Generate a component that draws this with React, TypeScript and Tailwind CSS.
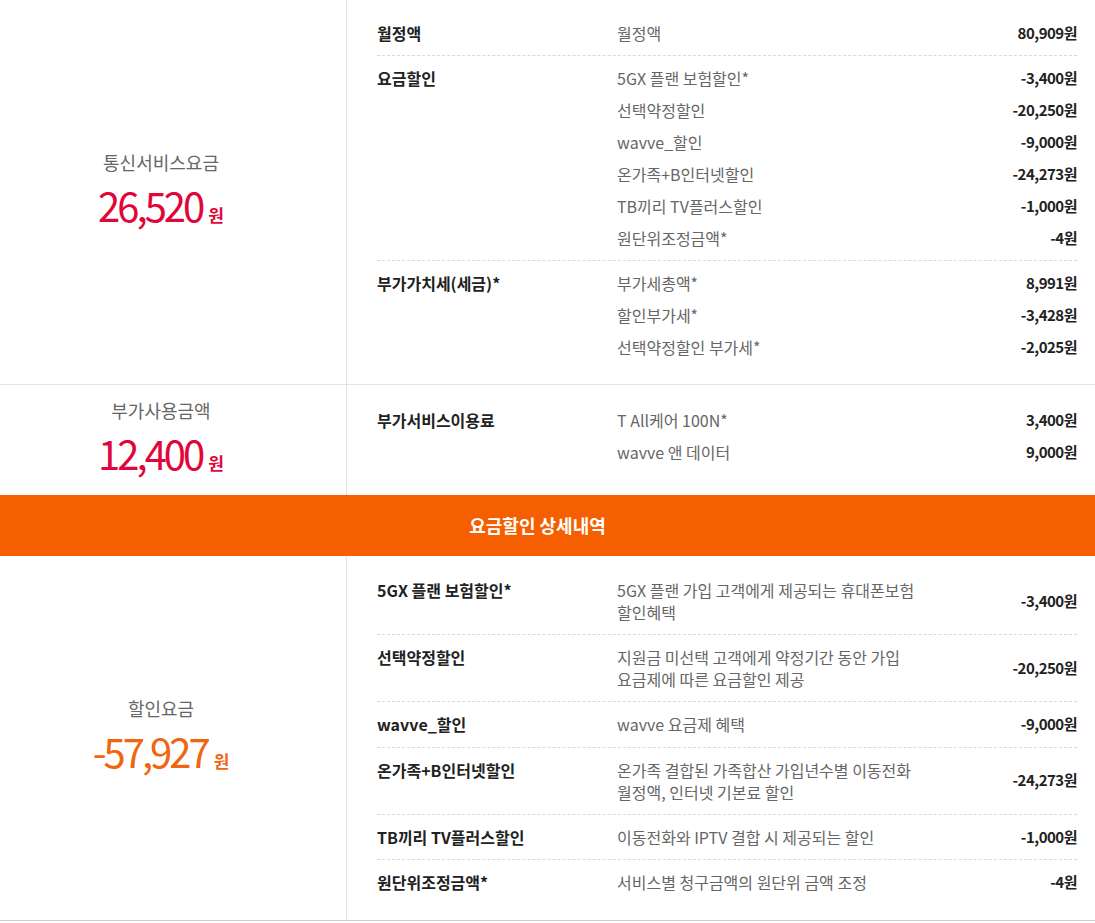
import React from "react";

type Line = { name: string; amount: string };
type Group = { title: string; lines: Line[] };

const FONT = '"Noto Sans CJK KR", "Noto Sans", sans-serif';

const serviceGroups: Group[] = [
  { title: "월정액", lines: [{ name: "월정액", amount: "80,909원" }] },
  {
    title: "요금할인",
    lines: [
      { name: "5GX 플랜 보험할인*", amount: "-3,400원" },
      { name: "선택약정할인", amount: "-20,250원" },
      { name: "wavve_할인", amount: "-9,000원" },
      { name: "온가족+B인터넷할인", amount: "-24,273원" },
      { name: "TB끼리 TV플러스할인", amount: "-1,000원" },
      { name: "원단위조정금액*", amount: "-4원" },
    ],
  },
  {
    title: "부가가치세(세금)*",
    lines: [
      { name: "부가세총액*", amount: "8,991원" },
      { name: "할인부가세*", amount: "-3,428원" },
      { name: "선택약정할인 부가세*", amount: "-2,025원" },
    ],
  },
];

const extraGroups: Group[] = [
  {
    title: "부가서비스이용료",
    lines: [
      { name: "T All케어 100N*", amount: "3,400원" },
      { name: "wavve 앤 데이터", amount: "9,000원" },
    ],
  },
];

const discounts: { title: string; desc: string[]; amount: string }[] = [
  {
    title: "5GX 플랜 보험할인*",
    desc: ["5GX 플랜 가입 고객에게 제공되는 휴대폰보험", "할인혜택"],
    amount: "-3,400원",
  },
  {
    title: "선택약정할인",
    desc: ["지원금 미선택 고객에게 약정기간 동안 가입", "요금제에 따른 요금할인 제공"],
    amount: "-20,250원",
  },
  { title: "wavve_할인", desc: ["wavve 요금제 혜택"], amount: "-9,000원" },
  {
    title: "온가족+B인터넷할인",
    desc: ["온가족 결합된 가족합산 가입년수별 이동전화", "월정액, 인터넷 기본료 할인"],
    amount: "-24,273원",
  },
  {
    title: "TB끼리 TV플러스할인",
    desc: ["이동전화와 IPTV 결합 시 제공되는 할인"],
    amount: "-1,000원",
  },
  {
    title: "원단위조정금액*",
    desc: ["서비스별 청구금액의 원단위 금액 조정"],
    amount: "-4원",
  },
];

function Summary({
  label,
  amount,
  color,
}: {
  label: string;
  amount: string;
  color: string;
}) {
  return (
    <div className="w-[347px] shrink-0 flex flex-col items-center justify-center border-r border-[#e3e3e3] pr-[24px] pb-2">
      <div className="text-[18px] leading-[26px] text-[#666]">{label}</div>
      <div className={`mt-[8px] flex items-baseline ${color}`}>
        <span className="text-[40px] leading-[44px] tracking-[-3px]">
          {amount}
        </span>
        <span className="ml-[6px] text-[17px] font-bold">원</span>
      </div>
    </div>
  );
}

function GroupRows({ groups }: { groups: Group[] }) {
  return (
    <>
      {groups.map((g, i) => (
        <div
          key={g.title}
          className={`flex py-[6px] ${
            i < groups.length - 1 ? "border-b border-dashed border-[#d9d9d9]" : ""
          }`}
        >
          <div className="w-[240px] shrink-0 text-[16px] leading-[32px] font-bold text-[#222]">
            {g.title}
          </div>
          <div className="flex-1">
            {g.lines.map((l) => (
              <div
                key={l.name}
                className="flex justify-between leading-[32px]"
              >
                <span className="text-[16px] text-[#666]">{l.name}</span>
                <span className="text-[15px] font-bold text-[#222] tracking-[-0.5px]">
                  {l.amount}
                </span>
              </div>
            ))}
          </div>
        </div>
      ))}
    </>
  );
}

export default function App() {
  return (
    <div className="w-[1095px] bg-white" style={{ fontFamily: FONT }}>
      <div className="flex border-b border-[#e3e3e3]">
        <Summary label="통신서비스요금" amount="26,520" color="text-[#e1063a]" />
        <div className="flex-1 pl-[30px] pr-[18px] pt-[11px] pb-[15px]">
          <GroupRows groups={serviceGroups} />
        </div>
      </div>

      <div className="flex">
        <Summary label="부가사용금액" amount="12,400" color="text-[#e1063a]" />
        <div className="flex-1 pl-[30px] pr-[18px] pt-[13px] pb-[21px]">
          <GroupRows groups={extraGroups} />
        </div>
      </div>

      <div className="h-[61px] bg-[#f65f00] flex items-center justify-center pr-[20px] text-white text-[18px] font-bold">
        요금할인 상세내역
      </div>

      <div className="flex border-b border-[#cfcfcf]">
        <Summary label="할인요금" amount="-57,927" color="text-[#f0650f]" />
        <div className="flex-1 pl-[30px] pr-[18px] pt-[12px] pb-[15px]">
          {discounts.map((d, i) => (
            <div
              key={d.title}
              className={`flex items-center py-[11px] ${
                i < discounts.length - 1
                  ? "border-b border-dashed border-[#d9d9d9]"
                  : ""
              }`}
            >
              <div className="w-[240px] shrink-0 self-start text-[16px] leading-[22px] font-bold text-[#222]">
                {d.title}
              </div>
              <div className="flex-1 text-[16px] leading-[22px] text-[#666]">
                {d.desc.map((t) => (
                  <div key={t}>{t}</div>
                ))}
              </div>
              <div className="text-[15px] font-bold text-[#222] tracking-[-0.5px]">
                {d.amount}
              </div>
            </div>
          ))}
        </div>
      </div>
    </div>
  );
}
